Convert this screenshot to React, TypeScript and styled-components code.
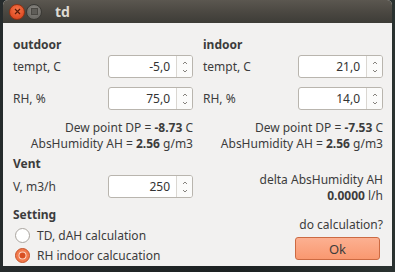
import React from "react"
import styled, { createGlobalStyle } from "styled-components"

const GlobalStyle = createGlobalStyle`
	html, body {
		margin: 0;
		padding: 0;
		background: #1f2526;
		font-family: "Noto Sans", "DejaVu Sans", sans-serif;
		font-size: 12px;
		color: #3c3c3c;
	}
`

const Desktop = styled.div`
	width: 395px;
	height: 272px;
	overflow: hidden;
	background: linear-gradient(90deg, #262b2c 0%, #1c2122 60%, #2a3230 100%);
`

const Window = styled.div`
	margin-left: 3px;
	width: 389px;
	height: 266px;
	background: #f2f1f0;
	display: flex;
	flex-direction: column;
	border-radius: 5px 5px 0 0;
	overflow: hidden;
`

const TitleBar = styled.div`
	height: 23px;
	flex: none;
	display: flex;
	align-items: center;
	padding-left: 6px;
	background: linear-gradient(180deg, #5b5750 0%, #4a4741 55%, #3d3c37 100%);
`

const WinButton = styled.div<{ $close?: boolean }>`
	width: 16px;
	height: 16px;
	border-radius: 50%;
	margin-right: 1px;
	display: flex;
	align-items: center;
	justify-content: center;
	box-sizing: border-box;
	border: 1px solid ${p => (p.$close ? "#8f3214" : "#3a3935")};
	background: ${p =>
		p.$close
			? "radial-gradient(circle at 50% 35%, #f4784a 0%, #e4522a 60%, #c8401c 100%)"
			: "radial-gradient(circle at 50% 35%, #8a8782 0%, #6d6b66 70%, #5c5a55 100%)"};
`

const Title = styled.div`
	margin-left: 12px;
	font-weight: bold;
	font-size: 14px;
	color: #dfdbd2;
	line-height: 23px;
`

const Content = styled.div`
	padding: 14px 9px 0 10px;
`

const Columns = styled.div`
	display: grid;
	grid-template-columns: 180px 180px;
	column-gap: 10px;
`

const Panel = styled.div`
	display: flex;
	flex-direction: column;
`

const Heading = styled.div<{ $top?: number }>`
	font-weight: bold;
	line-height: 16px;
	margin-top: ${p => p.$top ?? 0}px;
`

const FieldRow = styled.div<{ $top: number }>`
	display: flex;
	align-items: center;
	justify-content: space-between;
	height: 23px;
	margin-top: ${p => p.$top}px;
`

const SpinBox = styled.div`
	width: 85px;
	height: 23px;
	box-sizing: border-box;
	border: 1px solid #b9b5ae;
	border-radius: 3px;
	background: #ffffff;
	display: flex;
`

const SpinValue = styled.div`
	flex: 1;
	text-align: right;
	padding-right: 6px;
	line-height: 21px;
	color: #333333;
`

const SpinButtons = styled.div`
	width: 16px;
	border-left: 1px solid #dad7d2;
	background: #fbfbfa;
	border-radius: 0 2px 2px 0;
	display: flex;
	flex-direction: column;
	align-items: center;
	justify-content: space-between;
	padding: 5px 0 4px;
	box-sizing: border-box;
`

const Info = styled.div<{ $top?: number }>`
	text-align: right;
	line-height: 16px;
	margin-top: ${p => p.$top ?? 0}px;
`

const Radio = styled.label<{ $top?: number }>`
	display: flex;
	align-items: center;
	height: 20px;
	gap: 7px;
	padding-left: 2px;
	margin-top: ${p => p.$top ?? 0}px;
`

const OkButton = styled.div`
	margin-top: 4px;
	margin-left: auto;
	margin-right: 3px;
	width: 85px;
	height: 23px;
	box-sizing: border-box;
	border: 1px solid #cc6a42;
	border-radius: 3px;
	background: linear-gradient(180deg, #fcb091 0%, #f99870 100%);
	display: flex;
	align-items: center;
	justify-content: center;
	font-size: 13px;
	color: #3c3c3c;
`

const Arrow: React.FC<{ up?: boolean }> = ({ up }) => (
	<svg width="6" height="4" viewBox="0 0 6 4">
		{up ? (
			<path d="M1 3 L3 1 L5 3" fill="none" stroke="#85827d" strokeWidth="1" />
		) : (
			<path d="M1 1 L3 3 L5 1" fill="none" stroke="#85827d" strokeWidth="1" />
		)}
	</svg>
)

const Spin: React.FC<{ value: string }> = ({ value }) => (
	<SpinBox>
		<SpinValue>{value}</SpinValue>
		<SpinButtons>
			<Arrow up />
			<Arrow />
		</SpinButtons>
	</SpinBox>
)

const RadioMark: React.FC<{ checked?: boolean }> = ({ checked }) =>
	checked ? (
		<svg width="15" height="15" viewBox="0 0 15 15">
			<circle cx="7.5" cy="7.5" r="7" fill="#f37a4c" stroke="#c4522a" />
			<circle cx="7.5" cy="7.5" r="4" fill="#fbd2c0" />
			<circle cx="7.5" cy="7.5" r="3" fill="#d84f22" />
		</svg>
	) : (
		<svg width="15" height="15" viewBox="0 0 15 15">
			<circle cx="7.5" cy="7.5" r="7" fill="#ffffff" stroke="#a9a59f" />
		</svg>
	)

const App: React.FC = () => {
	return (
		<>
			<GlobalStyle />
			<Desktop>
				<Window>
					<TitleBar>
						<WinButton $close>
							<svg width="7" height="7" viewBox="0 0 7 7">
								<path d="M1 1 L6 6 M6 1 L1 6" stroke="#5a1a08" strokeWidth="1.2" />
							</svg>
						</WinButton>
						<WinButton>
							<svg width="7" height="7" viewBox="0 0 7 7">
								<rect x="0.5" y="0.5" width="6" height="6" fill="#5f5d58" stroke="#4a4843" />
							</svg>
						</WinButton>
						<Title>td</Title>
					</TitleBar>
					<Content>
						<Columns>
							<Panel>
								<Heading>outdoor</Heading>
								<FieldRow $top={2}>
									<span>tempt, C</span>
									<Spin value="-5,0" />
								</FieldRow>
								<FieldRow $top={9}>
									<span>RH, %</span>
									<Spin value="75,0" />
								</FieldRow>
								<Info $top={10}>
									Dew point DP = <b>-8.73</b> C
								</Info>
								<Info>
									AbsHumidity AH = <b>2.56</b> g/m3
								</Info>
							</Panel>
							<Panel>
								<Heading>indoor</Heading>
								<FieldRow $top={2}>
									<span>tempt, C</span>
									<Spin value="21,0" />
								</FieldRow>
								<FieldRow $top={9}>
									<span>RH, %</span>
									<Spin value="14,0" />
								</FieldRow>
								<Info $top={10}>
									Dew point DP = <b>-7.53</b> C
								</Info>
								<Info>
									AbsHumidity AH = <b>2.56</b> g/m3
								</Info>
							</Panel>
							<Panel>
								<Heading $top={4}>Vent</Heading>
								<FieldRow $top={3}>
									<span>V, m3/h</span>
									<Spin value="250" />
								</FieldRow>
								<Heading $top={9}>Setting</Heading>
								<Radio $top={2}>
									<RadioMark />
									TD, dAH calculation
								</Radio>
								<Radio>
									<RadioMark checked />
									RH indoor calcucation
								</Radio>
							</Panel>
							<Panel>
								<Info $top={20}>delta AbsHumidity AH</Info>
								<Info>
									<b>0.0000</b> l/h
								</Info>
								<Info $top={13}>do calculation?</Info>
								<OkButton>Ok</OkButton>
							</Panel>
						</Columns>
					</Content>
				</Window>
			</Desktop>
		</>
	)
}

export default App
